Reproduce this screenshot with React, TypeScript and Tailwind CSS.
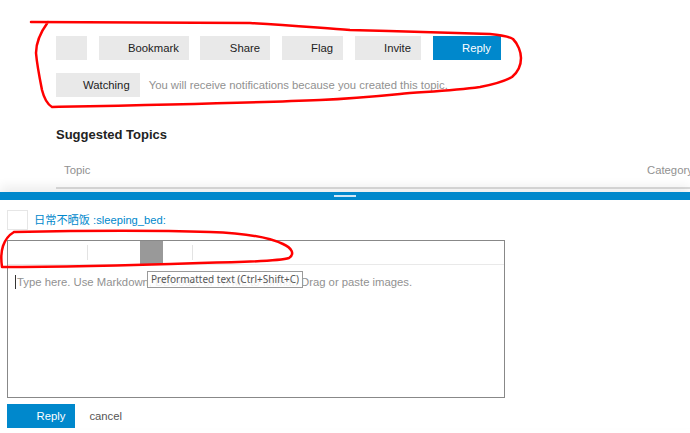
import React from "react";

const font = { fontFamily: '"Liberation Sans", Arial, sans-serif' };

function Btn({ label, primary, iconOnly }: { label?: string; primary?: boolean; iconOnly?: boolean }) {
  return (
    <div
      className={`flex items-center h-[24px] px-[10px] text-[11.3px] ${
        primary ? "bg-[#0088cc] text-white" : "bg-[#e9e9e9] text-[#222]"
      }`}
    >
      <span className={`inline-block w-[11px] ${iconOnly ? "" : "mr-[8.5px]"}`} />
      {label}
    </div>
  );
}

export default function App() {
  return (
    <div className="relative w-[690px] h-[433px] overflow-hidden bg-white" style={font}>
      {/* topic footer */}
      <div className="pl-[56px] pt-[36px]">
        <div className="flex gap-[11.5px]">
          <Btn iconOnly />
          <Btn label="Bookmark" />
          <Btn label="Share" />
          <Btn label="Flag" />
          <Btn label="Invite" />
          <Btn label="Reply" primary />
        </div>
        <div className="flex items-center mt-[13px]">
          <div className="flex items-center h-[24px] pl-[10px] pr-[10px] bg-[#e9e9e9] text-[#222] text-[11.3px]">
            <span className="inline-block w-[11px] mr-[6px]" />
            Watching
          </div>
          <div className="ml-[9px] text-[11.3px] text-[#919191]">
            You will receive notifications because you created this topic.
          </div>
        </div>
        <div className="mt-[30px] text-[13px] font-bold text-[#222] leading-[16px]">Suggested Topics</div>
        <div className="flex w-[651px] mt-[13px] h-[33px] items-start pt-[6px] border-b-2 border-[#dddddd] text-[11.3px] text-[#919191]">
          <div className="flex-1 pl-[8px]">Topic</div>
          <div className="w-[60px]">Category</div>
        </div>
      </div>

      {/* composer */}
      <div className="relative mt-[3px] bg-white shadow-[0_-6px_10px_rgba(0,0,0,0.07)]">
        <div className="flex justify-center items-center h-[8px] bg-[#0088cc]">
          <div className="w-[22px] h-[2px] bg-[#cfe6f5]" />
        </div>
        <div className="pl-[7px] pt-[10px]">
          <div className="flex items-center">
            <div className="w-[21px] h-[20px] border border-[#e6e6e6]" />
            <div className="ml-[6px] text-[11.2px] text-[#0088cc]" style={{ fontFamily: '"Liberation Sans", "Noto Sans CJK SC", sans-serif' }}>
              日常不晒饭 :sleeping_bed:
            </div>
          </div>
          <div className="relative mt-[10px] w-[498px] h-[158px] border border-[#888]">
            <div className="flex items-center h-[24px] border-b border-[#e9e9e9]">
              <div className="w-[79px]" />
              <div className="w-px h-[15px] bg-[#e3e3e3]" />
              <div className="w-[52px]" />
              <div className="w-[23px] h-[23px] bg-[#999999]" />
              <div className="w-[29px]" />
              <div className="w-px h-[15px] bg-[#e3e3e3]" />
            </div>
            <div className="flex items-center pl-[7px] pt-[9px] text-[11.3px] text-[#919191]">
              <span className="inline-block w-px h-[14px] bg-[#333] mr-px" />
              Type here. Use Markdown, BBCode, or HTML to format. Drag or paste images.
            </div>
            <div
              className="absolute left-[139px] top-[30px] h-[17px] px-[3px] flex items-center border border-[#9a9a9a] bg-white/85 text-[#575757] text-[10px] whitespace-nowrap"
              style={{ fontFamily: '"Noto Sans", "DejaVu Sans", sans-serif' }}
            >
              Preformatted text (Ctrl+Shift+C)
            </div>
          </div>
          <div className="flex items-center mt-[6px]">
            <Btn label="Reply" primary />
            <div className="ml-[14px] text-[11.3px] text-[#555]">cancel</div>
          </div>
        </div>
      </div>

      {/* red hand-drawn annotations */}
      <svg className="absolute inset-0 pointer-events-none" width="690" height="433" viewBox="0 0 690 433" fill="none">
        <path
          d="M31 22 L250 23 C290 25 320 28 350 30 C400 31 460 33 490 34 C500 35 508 36 513 39 C518 44 521 52 521 58 C521 66 518 72 512 77 C505 81 495 84 480 87 C450 91 420 92 400 94 C370 97 345 99 320 100 C250 103 150 105 52 107 C47 104 44 98 42 90 C40 80 37 65 36 53 C36 43 40 33 48 22"
          stroke="#ff0000"
          strokeWidth="2.5"
          strokeLinecap="round"
          strokeLinejoin="round"
        />
        <path
          d="M14 232 C60 231 150 230 210 232 C245 233 270 238 283 244 C292 248 295 254 289 258 C280 261 255 262 200 263 C140 265 60 267 2 267 C1 260 1 252 3 246 C5 240 9 235 14 232"
          stroke="#ff0000"
          strokeWidth="2.5"
          strokeLinecap="round"
          strokeLinejoin="round"
        />
      </svg>
    </div>
  );
}
